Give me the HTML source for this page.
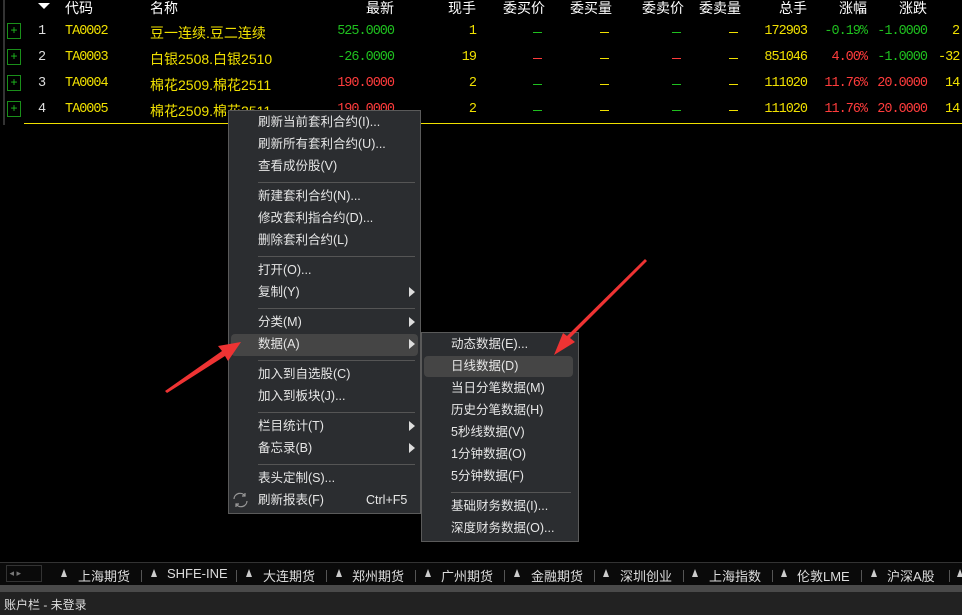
<!DOCTYPE html>
<html><head><meta charset="utf-8"><style>
*{margin:0;padding:0;box-sizing:border-box}
body{width:962px;height:615px;background:#000;position:relative;overflow:hidden;font-family:"Liberation Sans","Noto Sans CJK SC",sans-serif}
.a{position:absolute;white-space:nowrap}
.h{color:#fff;font-size:14px;top:-2px}
.r{text-align:right}
.m{font-family:"Liberation Mono","Noto Sans CJK SC",monospace;font-size:13.5px;letter-spacing:-1px}
.y{color:#f0e000}.g{color:#1fc01f}.rd{color:#ff3c3c}.w{color:#ddd}
.pl{position:absolute;left:7px;width:14px;height:16px;border:1px solid #1a8f1a;color:#1fc01f;font-size:12px;line-height:13px;text-align:center}
.menu{position:absolute;background:#2b2d30;border:1px solid #5a5a5a;}
.it{position:absolute;color:#e6e6e6;font-size:12.5px;line-height:22px;height:22px}
.sep{position:absolute;height:1px;background:#555}
.ar{position:absolute;width:0;height:0;border-top:5px solid transparent;border-bottom:5px solid transparent;border-left:6px solid #ddd}
.tab{position:absolute;top:566px;color:#ddd;font-size:13px}
.tr{position:absolute;top:569px;width:0;height:0;border-left:3px solid transparent;border-right:3px solid transparent;border-bottom:8px solid #ccc}
.dv{position:absolute;top:570px;width:1px;height:12px;background:#555}
</style></head><body>
<div class="a" style="left:3px;top:0;width:2px;height:125px;background:#333"></div>
<div class="a" style="left:38px;top:3px;width:0;height:0;border-left:6px solid transparent;border-right:6px solid transparent;border-top:6px solid #fff"></div>
<div class="a h" style="left:65px">代码</div>
<div class="a h" style="left:150px">名称</div>
<div class="a h r" style="left:330px;width:64px">最新</div>
<div class="a h r" style="left:420px;width:56px">现手</div>
<div class="a h" style="left:503px">委买价</div>
<div class="a h" style="left:570px">委买量</div>
<div class="a h" style="left:642px">委卖价</div>
<div class="a h" style="left:699px">委卖量</div>
<div class="a h r" style="left:760px;width:47px">总手</div>
<div class="a h r" style="left:820px;width:47px">涨幅</div>
<div class="a h r" style="left:880px;width:47px">涨跌</div>

<div class="pl" style="top:23px">+</div><div class="pl" style="top:49px">+</div><div class="pl" style="top:75px">+</div><div class="pl" style="top:101px">+</div>
<div class="a m w" style="left:38px;top:24px">1</div><div class="a m w" style="left:38px;top:50px">2</div><div class="a m w" style="left:38px;top:76px">3</div><div class="a m w" style="left:38px;top:102px">4</div>
<div class="a m y" style="left:65px;top:24px">TA0002</div><div class="a m y" style="left:65px;top:50px">TA0003</div><div class="a m y" style="left:65px;top:76px">TA0004</div><div class="a m y" style="left:65px;top:102px">TA0005</div>
<div class="a y" style="left:150px;top:23px;font-size:14px">豆一连续.豆二连续</div>
<div class="a y" style="left:150px;top:49px;font-size:14px">白银2508.白银2510</div>
<div class="a y" style="left:150px;top:75px;font-size:14px">棉花2509.棉花2511</div>
<div class="a y" style="left:150px;top:101px;font-size:14px">棉花2509.棉花2511</div>
<div class="a m g r" style="left:300px;width:94px;top:24px">525.0000</div>
<div class="a m g r" style="left:300px;width:94px;top:50px">-26.0000</div>
<div class="a m rd r" style="left:300px;width:94px;top:76px">190.0000</div>
<div class="a m rd r" style="left:300px;width:94px;top:102px">190.0000</div>
<div class="a m y r" style="left:420px;width:56px;top:24px">1</div>
<div class="a m y r" style="left:420px;width:56px;top:50px">19</div>
<div class="a m y r" style="left:420px;width:56px;top:76px">2</div>
<div class="a m y r" style="left:420px;width:56px;top:102px">2</div>
<div class="a" style="left:533px;top:32px;width:9px;height:1px;background:#1fc01f"></div>
<div class="a" style="left:533px;top:58px;width:9px;height:1px;background:#ff3c3c"></div>
<div class="a" style="left:533px;top:84px;width:9px;height:1px;background:#1fc01f"></div>
<div class="a" style="left:533px;top:110px;width:9px;height:1px;background:#1fc01f"></div>
<div class="a" style="left:600px;top:32px;width:9px;height:1px;background:#f0e000"></div>
<div class="a" style="left:600px;top:58px;width:9px;height:1px;background:#f0e000"></div>
<div class="a" style="left:600px;top:84px;width:9px;height:1px;background:#f0e000"></div>
<div class="a" style="left:600px;top:110px;width:9px;height:1px;background:#f0e000"></div>
<div class="a" style="left:672px;top:32px;width:9px;height:1px;background:#1fc01f"></div>
<div class="a" style="left:672px;top:58px;width:9px;height:1px;background:#ff3c3c"></div>
<div class="a" style="left:672px;top:84px;width:9px;height:1px;background:#1fc01f"></div>
<div class="a" style="left:672px;top:110px;width:9px;height:1px;background:#1fc01f"></div>
<div class="a" style="left:729px;top:32px;width:9px;height:1px;background:#f0e000"></div>
<div class="a" style="left:729px;top:58px;width:9px;height:1px;background:#f0e000"></div>
<div class="a" style="left:729px;top:84px;width:9px;height:1px;background:#f0e000"></div>
<div class="a" style="left:729px;top:110px;width:9px;height:1px;background:#f0e000"></div>
<div class="a m y r" style="left:740px;width:67px;top:24px">172903</div>
<div class="a m y r" style="left:740px;width:67px;top:50px">851046</div>
<div class="a m y r" style="left:740px;width:67px;top:76px">111020</div>
<div class="a m y r" style="left:740px;width:67px;top:102px">111020</div>
<div class="a m g r" style="left:800px;width:67px;top:24px">-0.19%</div>
<div class="a m rd r" style="left:800px;width:67px;top:50px">4.00%</div>
<div class="a m rd r" style="left:800px;width:67px;top:76px">11.76%</div>
<div class="a m rd r" style="left:800px;width:67px;top:102px">11.76%</div>
<div class="a m g r" style="left:860px;width:67px;top:24px">-1.0000</div>
<div class="a m g r" style="left:860px;width:67px;top:50px">-1.0000</div>
<div class="a m rd r" style="left:860px;width:67px;top:76px">20.0000</div>
<div class="a m rd r" style="left:860px;width:67px;top:102px">20.0000</div>
<div class="a m y" style="left:952px;top:24px">2.</div>
<div class="a m y" style="left:938px;top:50px">-32.</div>
<div class="a m y" style="left:945px;top:76px">14.</div>
<div class="a m y" style="left:945px;top:102px">14.</div>
<div class="a" style="left:24px;top:123px;width:938px;height:1px;background:#f0e000"></div>

<div class="menu" style="left:228px;top:110px;width:193px;height:404px"></div>
<div class="it" style="left:258px;top:111px">刷新当前套利合约(I)...</div>
<div class="it" style="left:258px;top:133px">刷新所有套利合约(U)...</div>
<div class="it" style="left:258px;top:155px">查看成份股(V)</div>
<div class="sep" style="left:258px;top:182px;width:157px"></div>
<div class="it" style="left:258px;top:185px">新建套利合约(N)...</div>
<div class="it" style="left:258px;top:207px">修改套利指合约(D)...</div>
<div class="it" style="left:258px;top:229px">删除套利合约(L)</div>
<div class="sep" style="left:258px;top:256px;width:157px"></div>
<div class="it" style="left:258px;top:259px">打开(O)...</div>
<div class="it" style="left:258px;top:281px">复制(Y)</div><div class="ar" style="left:409px;top:287px"></div>
<div class="sep" style="left:258px;top:308px;width:157px"></div>
<div class="it" style="left:258px;top:311px">分类(M)</div><div class="ar" style="left:409px;top:317px"></div>
<div class="a" style="left:231px;top:334px;width:187px;height:22px;background:#454545;border-radius:4px"></div>
<div class="it" style="left:258px;top:333px">数据(A)</div><div class="ar" style="left:409px;top:339px"></div>
<div class="sep" style="left:258px;top:360px;width:157px"></div>
<div class="it" style="left:258px;top:363px">加入到自选股(C)</div>
<div class="it" style="left:258px;top:385px">加入到板块(J)...</div>
<div class="sep" style="left:258px;top:412px;width:157px"></div>
<div class="it" style="left:258px;top:415px">栏目统计(T)</div><div class="ar" style="left:409px;top:421px"></div>
<div class="it" style="left:258px;top:437px">备忘录(B)</div><div class="ar" style="left:409px;top:443px"></div>
<div class="sep" style="left:258px;top:464px;width:157px"></div>
<div class="it" style="left:258px;top:467px">表头定制(S)...</div>
<div class="it" style="left:258px;top:489px">刷新报表(F)</div>
<div class="it" style="left:366px;top:489px">Ctrl+F5</div>
<svg class="a" style="left:232px;top:492px" width="17" height="16" viewBox="0 0 17 16"><path d="M2 7A6 6 0 0 1 13 4M15 9A6 6 0 0 1 4 12M13 1V4H10M4 15V12H7" fill="none" stroke="#999" stroke-width="1.2"/></svg>

<div class="menu" style="left:421px;top:332px;width:158px;height:210px"></div>
<div class="it" style="left:451px;top:333px">动态数据(E)...</div>
<div class="a" style="left:424px;top:356px;width:149px;height:21px;background:#454545;border-radius:4px"></div>
<div class="it" style="left:451px;top:355px">日线数据(D)</div>
<div class="it" style="left:451px;top:377px">当日分笔数据(M)</div>
<div class="it" style="left:451px;top:399px">历史分笔数据(H)</div>
<div class="it" style="left:451px;top:421px">5秒线数据(V)</div>
<div class="it" style="left:451px;top:443px">1分钟数据(O)</div>
<div class="it" style="left:451px;top:465px">5分钟数据(F)</div>
<div class="sep" style="left:451px;top:492px;width:120px"></div>
<div class="it" style="left:451px;top:495px">基础财务数据(I)...</div>
<div class="it" style="left:451px;top:517px">深度财务数据(O)...</div>

<svg class="a" style="left:0;top:0" width="962" height="615">
<polygon points="165,391 222,351 218,346 241,342 228,361 225,356 167,393" fill="#ee3333"/>
<polygon points="647,261 570,338 575,342 554,355 563,333 567,336 645,259" fill="#ee3333"/>
</svg>

<div class="a" style="left:0;top:562px;width:962px;height:23px;background:#0a0a0a;border-top:1px solid #333"></div>
<div class="a" style="left:6px;top:565px;width:36px;height:17px;border:1px solid #333;color:#777;font-size:9px;line-height:15px">&nbsp;◂ ▸</div>
<div class="tr" style="left:61px"></div><div class="tab" style="left:78px">上海期货</div><div class="dv" style="left:141px"></div>
<div class="tr" style="left:151px"></div><div class="tab" style="left:167px">SHFE-INE</div><div class="dv" style="left:236px"></div>
<div class="tr" style="left:246px"></div><div class="tab" style="left:263px">大连期货</div><div class="dv" style="left:326px"></div>
<div class="tr" style="left:336px"></div><div class="tab" style="left:352px">郑州期货</div><div class="dv" style="left:415px"></div>
<div class="tr" style="left:425px"></div><div class="tab" style="left:441px">广州期货</div><div class="dv" style="left:504px"></div>
<div class="tr" style="left:514px"></div><div class="tab" style="left:531px">金融期货</div><div class="dv" style="left:594px"></div>
<div class="tr" style="left:603px"></div><div class="tab" style="left:620px">深圳创业</div><div class="dv" style="left:683px"></div>
<div class="tr" style="left:692px"></div><div class="tab" style="left:709px">上海指数</div><div class="dv" style="left:772px"></div>
<div class="tr" style="left:781px"></div><div class="tab" style="left:797px">伦敦LME</div><div class="dv" style="left:861px"></div>
<div class="tr" style="left:871px"></div><div class="tab" style="left:887px">沪深A股</div><div class="dv" style="left:949px"></div>
<div class="tr" style="left:957px"></div>
<div class="a" style="left:0;top:585px;width:962px;height:7px;background:#4a4a4a"></div>
<div class="a" style="left:0;top:592px;width:962px;height:23px;background:#222"></div>
<div class="a" style="left:4px;top:596px;color:#ddd;font-size:12px">账户栏 - 未登录</div>
</body></html>
